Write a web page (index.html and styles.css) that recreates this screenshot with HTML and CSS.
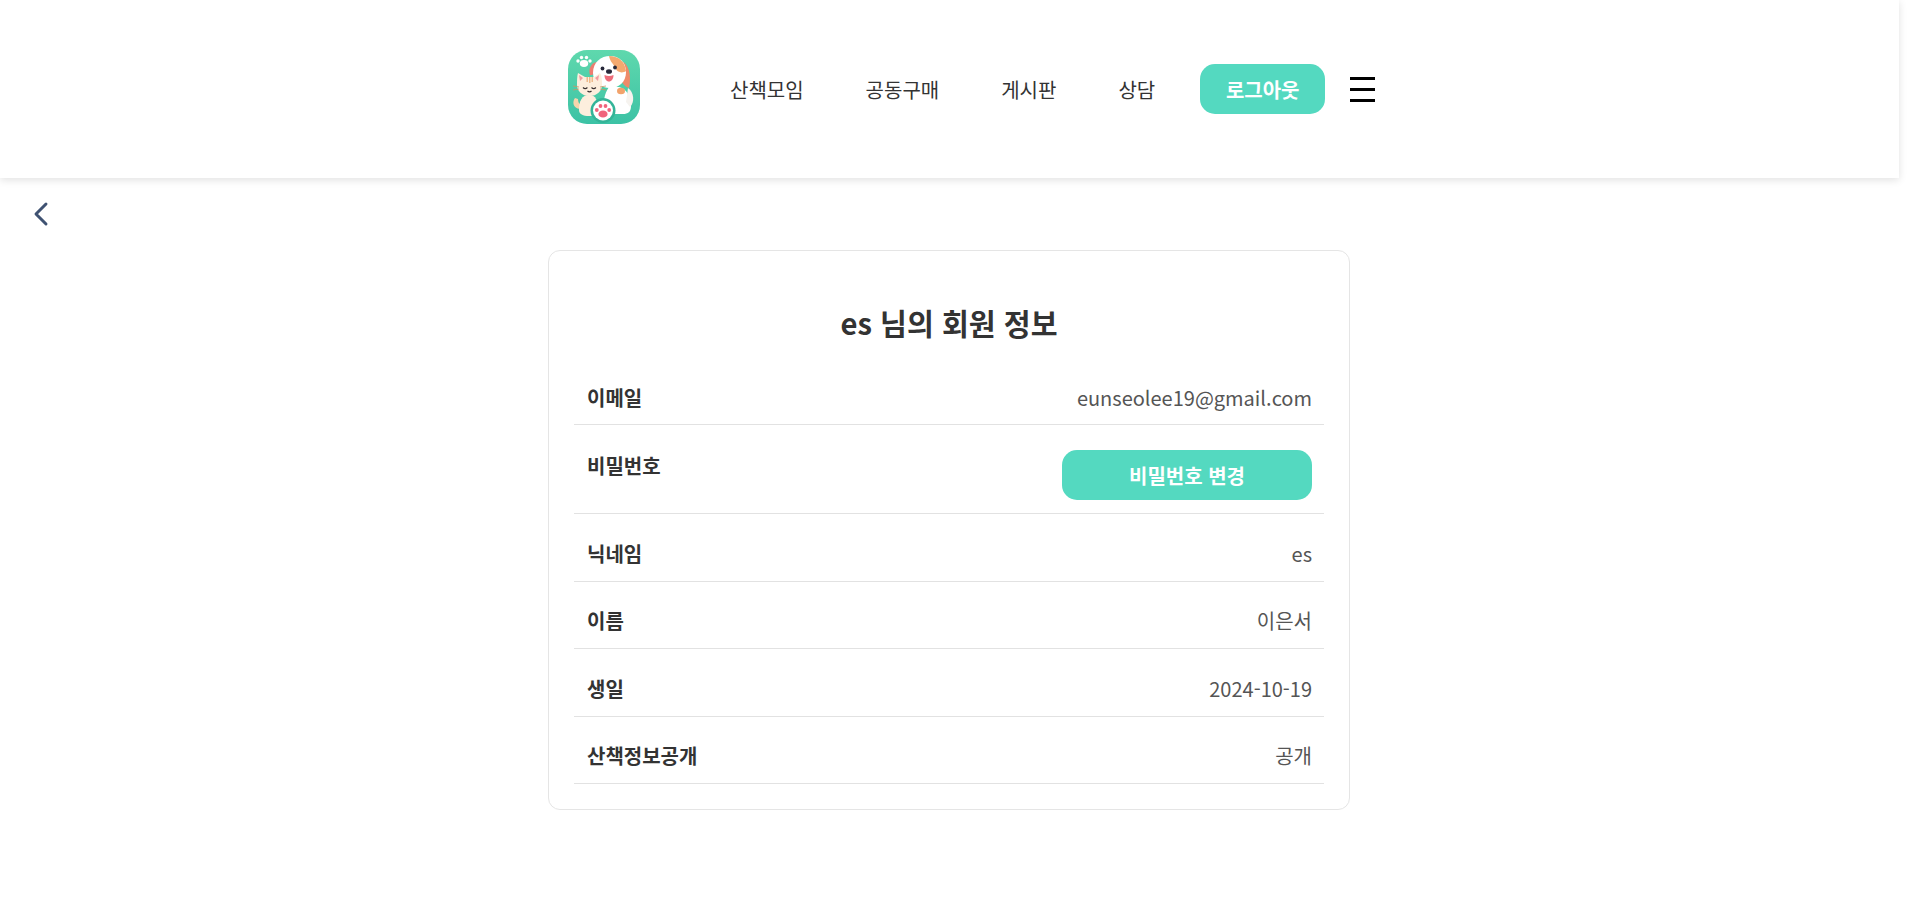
FILE: index.html
```html
<!DOCTYPE html>
<html lang="ko">

<head>
    <meta charset="UTF-8">
    <title>회원 정보</title>
    <link rel="stylesheet" href="styles.css">
</head>

<body>
    <header class="header">
        <div class="header-inner">
            <a href="#" class="logo">
                <svg width="72" height="74" viewBox="0 0 72 74">
                    <defs>
                        <linearGradient id="logoBg" x1="0" y1="0" x2="0" y2="1">
                            <stop offset="0" stop-color="#5fd8ad" />
                            <stop offset="1" stop-color="#3cc2a5" />
                        </linearGradient>
                    </defs>
                    <rect width="72" height="74" rx="19" fill="url(#logoBg)" />
                    <!-- small paw -->
                    <g fill="#fff">
                        <ellipse cx="16" cy="13.500" rx="4.200" ry="3.400" />
                        <circle cx="10" cy="11" r="1.700" />
                        <circle cx="13.500" cy="7.500" r="1.700" />
                        <circle cx="18.500" cy="7.500" r="1.700" />
                        <circle cx="22" cy="11" r="1.700" />
                    </g>
                    <!-- dog -->
                    <path d="M36 62c-1-9 0-18 5-25h10c8 2 12 10 12 19 0 6-3 8-8 8H40c-2 0-4 0-4-2z" fill="#fff" />
                    <path d="M60 38c6 4 7 14 2 19l-4-5z" fill="#f6f3ef" />
                    <ellipse cx="53" cy="41" rx="4" ry="3.200" fill="#f2a36b" />
                    <path d="M29 12c-6 1-9 7-7 13 3 0 7-2 9-6z" fill="#ee7d70" />
                    <path d="M53 11c7 2 11 13 8 27-5-1-9-8-10-14z" fill="#ee8a68" />
                    <path d="M25 23C25 12 33 6 42 6s16 6 16 16c0 10-7 16-16 16s-17-6-17-15z" fill="#fff" />
                    <path d="M41 6c9 0 16 5 17 15-4 3-9 1-11-3-1-4-5-6-6-12z" fill="#f4a96f" />
                    <ellipse cx="41" cy="21.500" rx="3" ry="2.300" fill="#27283a" />
                    <circle cx="34.500" cy="18.500" r="1.900" fill="#27283a" />
                    <circle cx="47" cy="17.500" r="1.900" fill="#27283a" />
                    <path d="M36.500 25q4.500 2 9 0c0 4-2 6.500-4.500 6.500s-4.500-2.500-4.500-6.500z" fill="#ee6d7a" />
                    <!-- cat -->
                    <path d="M7 48c-3 4-2 10 5 11l1-4c-2-1-3-3-3-6z" fill="#f6d5ac" />
                    <path d="M11 60c0-9 3-15 10-15s9 6 9 15c0 4-3 6-9 6s-10-2-10-6z" fill="#fdeedd" />
                    <path d="M9 35c0-4 0-9 1-12l7 4h9l6-4c2 3 2 8 2 12 0 6-5 11-12.500 11S9 41 9 35z" fill="#fdeedd" />
                    <path d="M11 25l4 3-3 3zM31 25l-4 3 3 3z" fill="#f29aa0" />
                    <path d="M18.500 27h1.500v5h-1.500zM21 27h1.500v6H21zM23.500 27H25v5h-1.500z" fill="#eeb98a" />
                    <path d="M15 37.500q2.200 2.200 4.400 0M23.500 37.500q2.200 2.200 4.400 0M19.500 41q2 1.800 4 0" stroke="#3a3030" stroke-width="1.200" fill="none" />
                    <path d="M5 36l6 1M5 40l6-1M32 37l6-1M32 39l6 1" stroke="#c9966a" stroke-width=".8" />
                    <!-- paw badge -->
                    <circle cx="35" cy="60.500" r="12.500" fill="#34b498" />
                    <circle cx="35" cy="60.500" r="10" fill="#fff" />
                    <g fill="#f0647c">
                        <ellipse cx="35" cy="64" rx="4.600" ry="3.600" />
                        <circle cx="28.800" cy="60" r="1.900" />
                        <circle cx="32.500" cy="56" r="1.900" />
                        <circle cx="37.500" cy="56" r="1.900" />
                        <circle cx="41.200" cy="60" r="1.900" />
                    </g>
                </svg>
            </a>
            <nav class="nav">
                <a href="#">산책모임</a>
                <a href="#">공동구매</a>
                <a href="#">게시판</a>
                <a href="#">상담</a>
            </nav>
            <button class="btn btn-logout">로그아웃</button>
            <button class="menu-btn" aria-label="메뉴">
                <span></span>
                <span></span>
                <span></span>
            </button>
        </div>
    </header>

    <div class="back-bar">
        <a href="#" class="back">
            <svg width="32" height="32" viewBox="0 0 24 24" fill="none" stroke="#3f5272" stroke-width="2.200" stroke-linecap="round" stroke-linejoin="round">
                <path d="M15.750 19.500 8.250 12l7.500-7.500" />
            </svg>
        </a>
    </div>

    <main class="card">
        <h1 class="title">es 님의 회원 정보</h1>
        <div class="row">
            <span class="label">이메일</span>
            <span class="value">eunseolee19@gmail.com</span>
        </div>
        <div class="row row-password">
            <span class="label">비밀번호</span>
            <button class="btn btn-change">비밀번호 변경</button>
        </div>
        <div class="row">
            <span class="label">닉네임</span>
            <span class="value">es</span>
        </div>
        <div class="row">
            <span class="label">이름</span>
            <span class="value">이은서</span>
        </div>
        <div class="row">
            <span class="label">생일</span>
            <span class="value">2024-10-19</span>
        </div>
        <div class="row">
            <span class="label">산책정보공개</span>
            <span class="value">공개</span>
        </div>
    </main>
</body>

</html>
```

FILE: styles.css
```css
* {
    box-sizing: border-box;
}

body {
    margin: 0;
    background: #fff;
    font-family: "Noto Sans CJK KR", "Noto Sans", sans-serif;
    color: #333;
}

a {
    color: inherit;
    text-decoration: none;
}

button {
    font-family: inherit;
    border: 0;
    cursor: pointer;
}

.header {
    width: 1899px;
    height: 178px;
    background: #fff;
    box-shadow: 0 2px 8px rgba(0, 0, 0, .12);
}

.header-inner {
    display: flex;
    align-items: center;
    height: 100%;
    padding-left: 568px;
}

.logo {
    display: flex;
    width: 72px;
    height: 74px;
    margin-right: 90px;
    margin-bottom: 5px;
}

.nav {
    display: flex;
    gap: 62px;
    margin-right: 45px;
    font-size: 20px;
}

.btn {
    background: #54d9c0;
    color: #fff;
    font-weight: 700;
    font-size: 20px;
}

.btn-logout {
    width: 125px;
    height: 50px;
    border-radius: 15px;
    margin-right: 25px;
}

.menu-btn {
    display: flex;
    flex-direction: column;
    justify-content: space-between;
    width: 25px;
    height: 25px;
    padding: 0;
    background: none;
}

.menu-btn span {
    display: block;
    height: 3px;
    background: #000;
}

.back-bar {
    padding: 20px 0 0 25px;
    height: 72px;
}

.back {
    display: block;
    width: 32px;
    height: 32px;
}

.card {
    width: 802px;
    height: 560px;
    margin-left: 548px;
    padding: 48px 25px 0;
    border: 1px solid #e5e5e5;
    border-radius: 12px;
}

.title {
    margin: 0 0 25px;
    font-size: 29.200px;
    font-weight: 700;
    line-height: 46px;
    text-align: center;
}

.row {
    display: flex;
    justify-content: space-between;
    align-items: flex-end;
    height: 67.500px;
    padding: 0 12px 13px 13px;
    border-bottom: 1px solid #e2e2e2;
    font-size: 20px;
}

.row:nth-child(2) {
    height: 55px;
    padding-bottom: 12px;
}

.row-password {
    align-items: flex-start;
    height: 89px;
    padding-top: 25px;
}

.row-password .label {
    margin-top: 1px;
}

.label {
    font-weight: 700;
}

.value {
    color: #555;
}

.btn-change {
    width: 250px;
    height: 50px;
    border-radius: 15px;
    font-size: 20px;
}
```
